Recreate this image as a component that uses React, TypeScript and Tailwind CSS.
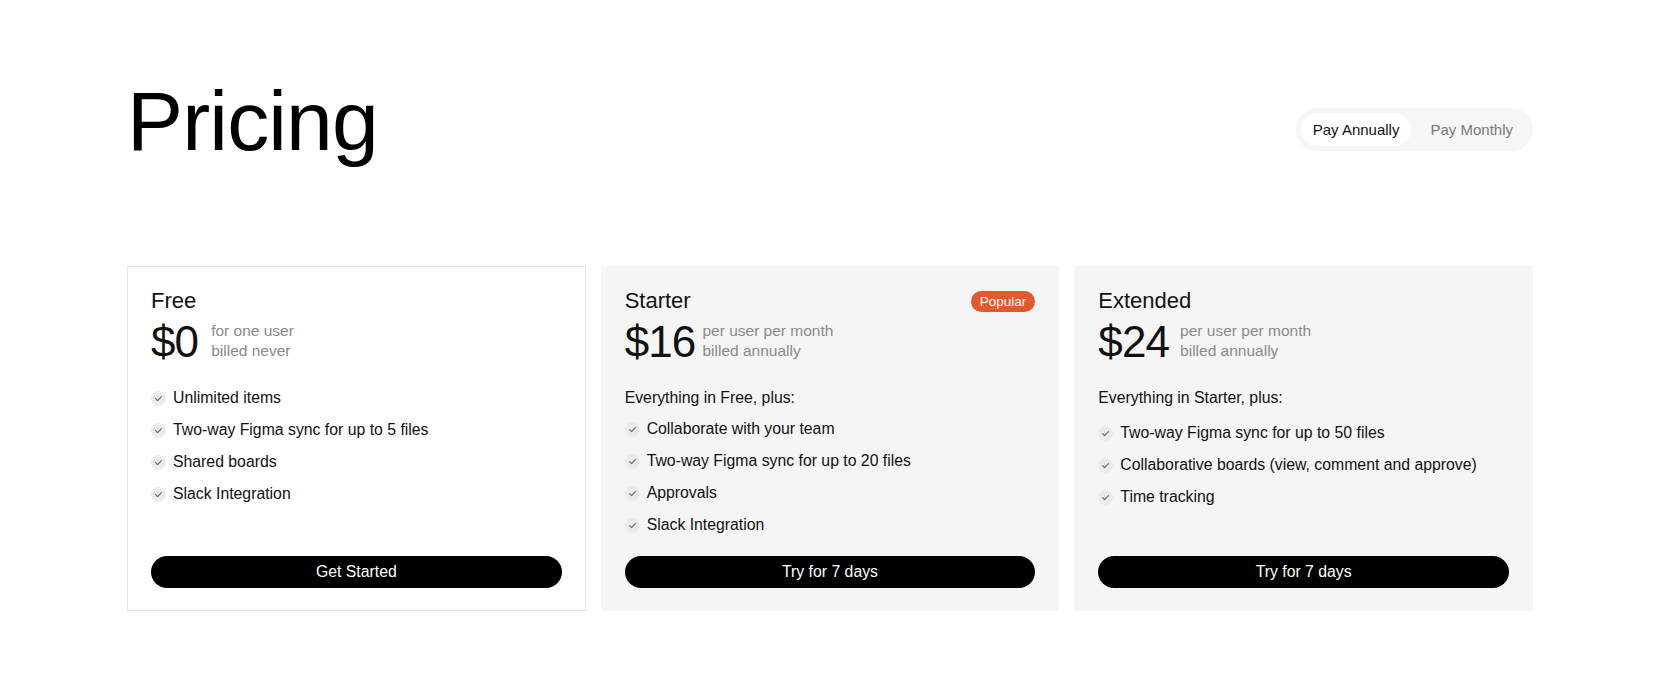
import React from "react";

const font = { fontFamily: '"Liberation Sans", Arial, sans-serif' };

function Check() {
  return (
    <span className="flex h-[15px] w-[15px] shrink-0 items-center justify-center rounded-full bg-[#ebebeb]">
      <svg width="9" height="9" viewBox="0 0 10 10" fill="none">
        <path d="M1.8 5.2 L4 7.3 L8.3 2.8" stroke="#666" strokeWidth="1.2" strokeLinecap="round" strokeLinejoin="round" />
      </svg>
    </span>
  );
}

function Feature({ text }: { text: string }) {
  return (
    <li className="flex items-center gap-[7px] text-[15.8px] leading-[20px] text-[#111]">
      <Check />
      <span>{text}</span>
    </li>
  );
}

type Plan = {
  name: string;
  price: string;
  sub1: string;
  sub2: string;
  heading?: string;
  features: string[];
  cta: string;
  popular?: boolean;
  highlighted: boolean;
  listGap: string;
  priceGap: string;
};

const plans: Plan[] = [
  {
    name: "Free",
    price: "$0",
    sub1: "for one user",
    sub2: "billed never",
    features: ["Unlimited items", "Two-way Figma sync for up to 5 files", "Shared boards", "Slack Integration"],
    cta: "Get Started",
    highlighted: false,
    listGap: "mt-0",
    priceGap: "gap-[13px]",
  },
  {
    name: "Starter",
    price: "$16",
    sub1: "per user per month",
    sub2: "billed annually",
    heading: "Everything in Free, plus:",
    features: ["Collaborate with your team", "Two-way Figma sync for up to 20 files", "Approvals", "Slack Integration"],
    cta: "Try for 7 days",
    popular: true,
    highlighted: true,
    listGap: "mt-[11px]",
    priceGap: "gap-[7px]",
  },
  {
    name: "Extended",
    price: "$24",
    sub1: "per user per month",
    sub2: "billed annually",
    heading: "Everything in Starter, plus:",
    features: ["Two-way Figma sync for up to 50 files", "Collaborative boards (view, comment and approve)", "Time tracking"],
    cta: "Try for 7 days",
    highlighted: true,
    listGap: "mt-[15px]",
    priceGap: "gap-[11px]",
  },
];

function Card({ plan }: { plan: Plan }) {
  return (
    <div
      className={
        "flex flex-col border px-[23px] pt-[20px] pb-[22px] " +
        (plan.highlighted ? "border-[#f5f5f5] bg-[#f5f5f5]" : "border-[#e6e6e6] bg-white")
      }
    >
      <div className="flex items-center justify-between">
        <div className="text-[22px] leading-[28px] text-[#111]">{plan.name}</div>
        {plan.popular && (
          <span className="rounded-full bg-[#e4582d] px-[9px] text-[13.5px] leading-[21px] text-white">Popular</span>
        )}
      </div>
      <div className={"mt-[5px] flex items-start " + plan.priceGap}>
        <div className="text-[44px] leading-[44px] tracking-[-0.02em] text-[#111]">{plan.price}</div>
        <div className="mt-[1px] text-[15.5px] leading-[20px] text-[#8a8a8a]">
          <div>{plan.sub1}</div>
          <div>{plan.sub2}</div>
        </div>
      </div>
      <div className="mt-[24px]">
        {plan.heading && <div className="text-[15.8px] leading-[20px] text-[#111]">{plan.heading}</div>}
        <ul className={"flex flex-col gap-[12px] " + plan.listGap}>
          {plan.features.map((f) => (
            <Feature key={f} text={f} />
          ))}
        </ul>
      </div>
      <button className="mt-auto h-[32px] w-full rounded-full bg-black text-[15.8px] text-white">{plan.cta}</button>
    </div>
  );
}

export default function App() {
  return (
    <div className="min-h-[694px] w-full bg-white px-[127px] pt-[79px]" style={font}>
      <div className="flex items-start justify-between">
        <h1 className="text-[84px] leading-[84px] tracking-[-0.01em] text-black">Pricing</h1>
        <div className="mt-[29px] flex items-center rounded-full bg-[#f6f6f6] p-[5px]">
          <span className="rounded-full bg-white px-[12px] text-[15px] leading-[33px] text-[#111]">Pay Annually</span>
          <span className="pl-[19px] pr-[15px] text-[15px] leading-[33px] text-[#7a7a7a]">Pay Monthly</span>
        </div>
      </div>
      <div className="mt-[103px] grid h-[345px] grid-cols-3 gap-[15px]">
        {plans.map((p) => (
          <Card key={p.name} plan={p} />
        ))}
      </div>
    </div>
  );
}
